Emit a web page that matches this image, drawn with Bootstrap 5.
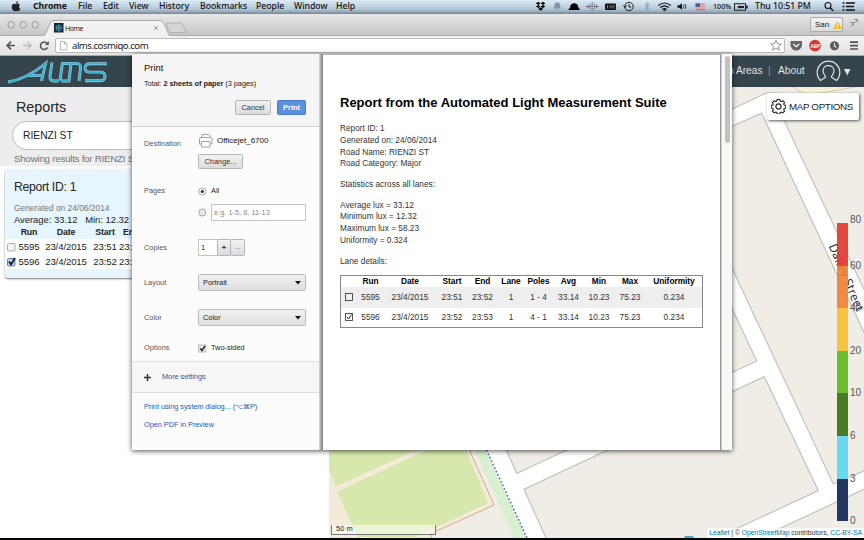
<!DOCTYPE html>
<html lang="en">
<head>
<meta charset="utf-8">
<title>ALMS - Print report</title>
<link href="https://cdn.jsdelivr.net/npm/bootstrap@5.3.0/dist/css/bootstrap.min.css" rel="stylesheet">
<style>
body{width:864px;height:540px;overflow:hidden;font-family:"Liberation Sans",Arial,sans-serif;color:#222;line-height:1.2;background:#000}
.desk{width:864px;height:540px}
svg{display:block;flex:none}
.osbar{height:14px;padding-left:11px;background:linear-gradient(#dcebf5,#b4c8d8 70%,#8698a6);border-bottom:1px solid #7d8a95;font:500 8.7px/13px "Noto Sans",sans-serif;color:#111}
.osbar span{flex:none;white-space:nowrap}
.os-app{font-weight:700;margin-left:12px;width:45px}
.tabstrip{height:22px;background:linear-gradient(#aaa,#aaa) bottom/100% 1px no-repeat,linear-gradient(#e8e8e8,#c4c4c4)}
.profile{width:33px;height:15px;margin-top:3px;border:1px solid #aaa;border-radius:2px;font-size:8px;background:linear-gradient(#f4f4f4,#dcdcdc)}
.toolbar-c{height:20px;background:linear-gradient(#f3f3f3,#e2e2e2);border-bottom:1px solid #a9a9a9}
.urlbox{width:730px;height:15px;background:#fff;border:1px solid #bbb;border-radius:2px;font:9.6px/13px "Noto Sans",sans-serif;letter-spacing:-.5px;color:#222}
.apphead{height:31px;background:#36444b;color:#dfe3e5;font-size:10.2px}
.apphead span{white-space:nowrap}
.workspace{height:451px;background:#fff}
.side{width:329px}
.finder{height:79px;background:#ededee;padding:11px 0 0 12px}
.finder h1{font-size:14.3px;line-height:18px;margin:0 0 5px 4px;font-weight:400}
.query{width:290px;height:29px;border:1px solid #bbb;border-radius:15px;background:#fff;padding-left:10px;font-size:10.3px;line-height:27px}
.found{font-size:9.9px;letter-spacing:-.3px;line-height:12px;margin:3px 0 0 2px;color:#777;width:119px;overflow:hidden;white-space:nowrap}
.report{margin:3px 0 0 5px;width:310px;height:109px;background:#e7f5fe;border-radius:3px;box-shadow:0 1px 2px #777;padding-top:10px}
.report h2{font-size:12.2px;letter-spacing:-.3px;line-height:16px;margin:0 0 7px 9px;font-weight:400}
.report p{margin:0 0 0 9px;line-height:12px;white-space:pre}
.runs{display:grid;grid-template-columns:12px 24px 50px 28px 13px;width:127px;overflow:hidden;font-size:9.6px;letter-spacing:-.12px;white-space:nowrap}
.runs>*{text-align:center}
.runs.hd{font-size:8.8px;font-weight:700;line-height:13px}
.runs.rw{line-height:15px;height:15px;align-items:center}
.rowsbg{background:#fff}
.map{width:535px;background:#f0ede6}
.mapopt{right:5px;top:6px;width:92px;height:27px;background:#fff;border-radius:2px;box-shadow:1px 1px 3px #555;font-size:9.8px;white-space:nowrap;letter-spacing:-.35px}
.legend{left:508px;top:136px}
.legend-row{height:42.6px}
.legend-row i{width:11px;height:100%}
.legend-row b{font:10px/10px "Liberation Sans",sans-serif;color:#555;margin:0 0 -5px 2px}
.legend .first{position:absolute;left:13px;top:-8px;font:10px/10px "Liberation Sans",sans-serif;color:#555}
.scale{left:2px;bottom:3px;width:105px;height:10px;background:rgba(255,255,255,.5);border:1.5px solid #777;border-top:0;font-size:7.5px;line-height:8px;padding-left:4px}
.attrib{right:0;bottom:0;height:10px;background:rgba(255,255,255,.75);font-size:6.75px;line-height:10px;padding:0 2px 0 2px;white-space:nowrap;color:#333}
.attrib span{color:#0078a8}
.dialog{left:132px;top:54px;width:600px;height:396px;background:#fcfcfc;box-shadow:0 1px 5px rgba(0,0,0,.7)}
.ctl{width:187px;font-size:7.4px;color:#222}
.ctl-top{height:73px;background:#f5f5f5;border-bottom:1px solid #d2d2d2;padding:7px 13px 0 12px}
.ctl-top h3{font-size:9.4px;line-height:14px;margin:0;color:#111}
.ctl-top p{line-height:10px;margin:4px 0 11px;white-space:nowrap;letter-spacing:-.05px}
.pbtn{font-size:7.4px;line-height:13px;height:15px;border:1px solid #b5b5b5;border-radius:1.5px;background:linear-gradient(#f2f2f2,#dcdcdc);text-align:center;color:#333}
.pbtn.blue{background:#5b91dc;border-color:#4a7dc7;color:#fff;font-weight:700}
.opt{padding:0 13px 0 12px}
.opt>label{width:54px;flex:none;color:#555;line-height:12px}
.opt.r1{height:51px}.opt.r2{height:52px}.opt.r3{height:35px}.opt.r4{height:26px}
.sel{width:108px;height:17px;border:1px solid #bcbcbc;border-radius:1.5px;background:linear-gradient(#f1f1f1,#dedede);padding:0 4px;line-height:15px}
.field{border:1px solid #c4c4c4;background:#fff}
.more{height:32px;background:#f6f6f6;border-top:1px solid #ddd;border-bottom:1px solid #ddd;padding-left:12px}
.lnk{color:#245bb5;letter-spacing:-.06px}
.gutter{width:4px;background:linear-gradient(90deg,#ddd,#999 60%,#888)}
.sheet{width:397px;background:#fff;border-top:1px solid #b5b5b0;padding:39px 0 0 17px;font-size:8.3px;line-height:11.8px;color:#333}
.sheet h2{font-size:13px;line-height:17px;font-weight:700;color:#000;margin:0 0 12px;white-space:nowrap}
.sheet p{margin:0 0 8.8px;white-space:nowrap}
.lanes{width:363px;height:53px;border:1px solid #888;font-size:8.3px;margin-top:-1px}
.lanes>div{display:grid;grid-template-columns:16px 27px 52px 32px 29px 28px 27px 33px 28px 34px 54px;text-align:center;align-items:center;height:20.5px;white-space:nowrap;justify-items:center}
.lanes>div.hd{height:11px;font-weight:700;color:#000}
.lanes>div.alt{background:#eee}
.rail{width:12px;background:linear-gradient(90deg,#999 0 1px,#ccc 1px 2px,#f8f8f8 2px);padding:2px 0 0 5px}
.thumb{width:5px;height:87px;border-radius:3px;background:#c1c1c1}
</style>
<script src="https://cdn.jsdelivr.net/npm/bootstrap@5.3.0/dist/js/bootstrap.bundle.min.js"></script>
</head>
<body>
<div class="desk d-flex flex-column position-relative">
 <div class="osbar d-flex align-items-center">
  <svg width="10" height="11" viewBox="0 0 10 11"><path d="M5 3.2C6 2.6 8 2.3 9 3.8 7.4 4.8 7.7 7 9.3 7.6 8.6 9.5 7.5 10.8 6.3 10.2 5.4 9.8 5 9.8 4.2 10.2 2.6 10.9.6 8 .7 5.6.8 3 3.300 2.400 5 3.200zM5 2.800C4.900 1.400 5.800.5 7 .3 7.100 1.600 6.200 2.700 5 2.800z" fill="#222"/></svg>
  <span class="os-app">Chrome</span><span style="width:25px">File</span><span style="width:26px">Edit</span><span style="width:30px">View</span><span style="width:41px">History</span><span style="width:56px">Bookmarks</span><span style="width:38px">People</span><span style="width:42px">Window</span><span style="width:196px">Help</span>
  <svg width="177" height="13" viewBox="532 0 177 13">
   <path d="M538.300 1.800l2.200 1.600-2.400 1.500-2.200-1.600zM543 1.800l2.300 1.600-2.300 1.500-2.300-1.600zM538.100 4.900l2.400 1.500-2.200 1.600-2.400-1.600zM543 4.900l2.300 1.500-2.300 1.600-2.300-1.600zM540.700 7.200l2.500 1.500-2.500 2-2.500-2z" fill="#000"/>
   <path d="M553.500 8.500c1.200-1 .9-4.300 1.500-5.300.6-1.100 4-1.100 4.600 0 .6 1 .3 4.300 1.500 5.300zM556 9h2.500l-1.200 1.500z" fill="#8495a3"/>
   <path d="M568.500 10c0-1.500 1.500-1.500 1.700-3 .2-5 7.800-5 8 0 .2 1.500 1.700 1.500 1.700 3z" fill="#000"/>
   <path d="M588 5v3M590 4v5M592.200 2v9M594.500 4v5M596.500 5v3M586 6.500h12.500" stroke="#556" stroke-width=".9" stroke-dasharray="1.300 .6"/>
   <rect x="605" y="3.500" width="11" height="6.500" rx="1" fill="#111"/><path d="M607.500 5v3.500M610 5v3.500M612 5v3.500M614 5v3.500" stroke="#aaa" stroke-width=".7"/>
   <circle cx="629" cy="6.500" r="4.200" fill="none" stroke="#222"/><path d="M629 4v3h2.200M623.500 5.500l1.500 2 1.500-2" fill="none" stroke="#222"/>
   <path d="M645 4l4 4.500-2 2v-8l2 2-4 4.500" fill="none" stroke="#8a99a5" stroke-width=".9"/>
   <path d="M658.300 5.500q6.200-5 12.400 0M660.300 7.500q4.200-3.400 8.400 0M662.300 9.400q2.200-1.600 4.400 0" fill="none" stroke="#111" stroke-width="1.200"/><circle cx="664.500" cy="10.300" r="1" fill="#111"/>
   <path d="M677.500 5.300h2l2.500-2v6.500l-2.500-2h-2z" fill="#111"/><path d="M683.400 4.800q1 1.700 0 3.500M685 4q1.700 2.500 0 5" fill="none" stroke="#222" stroke-width=".8"/>
   <rect x="695.500" y="3.500" width="9.500" height="6.500" fill="#eee"/><path d="M695.500 4h9.500M695.500 6h9.500M695.500 8h9.500M695.500 9.700h9.500" stroke="#d54a4a" stroke-width=".9"/><rect x="695.500" y="3.500" width="4.500" height="3.400" fill="#4a5b9a"/>
  </svg>
  <span style="width:21px;font-size:7.2px;margin-left:4px">100%</span>
  <svg width="14" height="8" viewBox="0 0 14 8"><rect x=".5" y=".7" width="11" height="6.500" fill="none" stroke="#222"/><path d="M12 2.500h1.700v3H12zM3 4l3-1.800v3.600zM6 3h4v2H6z" fill="#222"/></svg>
  <span style="width:69px;margin-left:7px">Thu 10:51 PM</span>
  <svg width="36" height="11" viewBox="0 0 36 11"><circle cx="4" cy="4.500" r="3" fill="none" stroke="#111" stroke-width="1.100"/><path d="M6.200 6.800l3 3" stroke="#111" stroke-width="1.400"/><path d="M18.500 2h2M22 2h9M18.500 5.500h2M22 5.500h8M18.500 9h2M22 9h9" stroke="#111" stroke-width="1.500"/></svg>
 </div>
 <div class="tabstrip d-flex">
  <svg width="200" height="22" viewBox="0 14 200 22">
   <g fill="#d8d8d8" stroke="#929292" stroke-width=".9"><circle cx="11.200" cy="24.800" r="3.300"/><circle cx="23.200" cy="24.800" r="3.300"/><circle cx="35.200" cy="24.800" r="3.300"/></g>
   <path d="M0 35.500h42c3 0 4-2 5-5l3-7q1-3 4-3h106q3 0 4 3l3 7c1 3 2 5 5 5h30" fill="#f1f1f1" stroke="#aaa"/>
   <path d="M46 35.600h122" stroke="#f1f1f1" stroke-width="1.400"/>
   <path d="M167 23h13q2 0 3 2l2.500 6q.5 1.500-1.500 1.500h-12q-2 0-3-2l-2.500-5.500q-.8-2 .5-2z" fill="#d4d4d4" stroke="#aaa" stroke-width=".8"/>
   <rect x="54" y="23" width="9.500" height="9.500" fill="#12222f"/><path d="M55.500 25l6 6M61.500 25l-6 6M58.700 24v8M55 27.800h8" stroke="#4793b5" stroke-width=".9"/><circle cx="58.700" cy="27.800" r="2.500" fill="none" stroke="#4793b5" stroke-width=".7"/>
   <text x="65" y="30.500" font-size="7" font-family="Noto Sans" fill="#222" textLength="18.500">Home</text>
   <path d="M154.300 26l3.600 3.600M157.900 26l-3.600 3.600" stroke="#888" stroke-width=".9"/>
  </svg>
  <div class="profile d-flex align-items-center ms-auto ps-1">San<svg class="ms-1" width="9" height="8" viewBox="0 0 9 8"><path d="M4.500 0L9 8H0z" fill="#f2bd3a"/><path d="M4.500 3v2.500M4.500 6.200v1" stroke="#fff"/></svg></div>
  <svg width="21" height="21" viewBox="0 0 21 21"><path d="M11 5.500h3.500V9M14.500 5.500l-3.500 4M7 8.500h3.500V12M10.500 9l-3 3.500" fill="none" stroke="#777" stroke-dasharray="1.200 .5"/></svg>
 </div>
 <div class="toolbar-c d-flex align-items-center">
  <svg width="55" height="20" viewBox="0 36 55 20"><path d="M15 45.500H7.500M11 41.700l-3.800 3.800 3.800 3.800" fill="none" stroke="#555" stroke-width="1.700"/><path d="M23 45.500h7.500M27.500 41.700l3.800 3.800-3.800 3.800" fill="none" stroke="#bbb" stroke-width="1.300"/><path d="M47 43.300a3.700 3.700 0 1 0 .6 4" fill="none" stroke="#555" stroke-width="1.600"/><path d="M48.800 41v4h-4z" fill="#555"/></svg>
  <div class="urlbox d-flex"><svg width="16" height="13" viewBox="0 0 16 13"><path d="M4.500 2.500h4l2.500 2.500v6h-6.500zM8.500 2.500v2.500h2.500" fill="#fafafa" stroke="#aaa" stroke-width=".8"/></svg><span>alms.cosmiqo.com</span>
  <svg class="ms-auto" style="margin-right:2px" width="12" height="13" viewBox="0 0 12 13"><path d="M5 1.300l1.500 3.400 3.700.3-2.800 2.400.9 3.700L5 9.200l-3.300 1.900.9-3.700L-.2 5l3.700-.3z" fill="none" stroke="#888" stroke-width=".9" transform="translate(1)"/></svg></div>
  <svg width="79" height="20" viewBox="785 36 79 20"><path d="M790.500 41h11.500v4.500q-1.500 5-5.800 5t-5.700-5z" fill="#666"/><path d="M793.300 44l3 2.700 3-2.700" fill="none" stroke="#fff" stroke-width="1.200"/><circle cx="815" cy="45.600" r="5.800" fill="#d33a30"/><text x="810.600" y="47.500" font-size="4.500" font-weight="700" fill="#fff" font-family="Liberation Sans">ABP</text><circle cx="834.500" cy="45.800" r="4.600" fill="#5c5c5c"/><path d="M834.500 43v3.200l2 1" fill="none" stroke="#eee" stroke-width="1.100"/><path d="M850 42.200h8M850 45.600h8M850 49h8" stroke="#555" stroke-width="1.700"/></svg>
 </div>
 <div class="apphead d-flex align-items-center">
  <svg width="120" height="31" viewBox="0 56 120 31">
   <defs><path id="alms" d="M8 82C21 80 34 73 45.500 63.500L41.500 81M28 75.500h14M52 62.500L50 76q-.6 5 4 5h5M62.500 62.500L60 80.500M61 63.500h15.500q4.500 0 4 4.500L79 81M71 64l-2 17h-8M107 63.700H90q-5 0-5 4.200t5 4.200h10q5 0 5 4.300t-5 4.300H85"/></defs>
   <use href="#alms" fill="none" stroke="#a8cfe0" stroke-width="2.900"/><use href="#alms" fill="none" stroke="#30b3cf" stroke-width="1.800"/></svg>
  <span style="margin-left:608px;width:40px">n Areas</span><span style="width:10px;color:#87949a">|</span><span style="width:37px">About</span>
  <svg width="38" height="31" viewBox="816 56 38 31"><path d="M821.500 80.500a11.300 11.300 0 1 1 16 0l-5-3.200c-1-1 2.500-2.500 2.500-6.500 0-7-11-7-11 0 0 4 3.500 5.500 2.500 6.500z" fill="none" stroke="#dfe3e5" stroke-width="1.200"/><path d="M845 69h6.500l-3.200 6.500z" fill="#dfe3e5"/></svg>
 </div>
 <div class="workspace d-flex">
  <div class="side">
   <div class="finder"><h1>Reports</h1><div class="query">RIENZI ST</div><div class="found">Showing results for RIENZI ST</div></div>
   <div class="report">
    <h2>Report ID: 1</h2>
    <p style="font-size:8.400px;color:#777">Generated on 24/06/2014</p>
    <p style="font-size:9.400px">Average: 33.12   Min: 12.32</p>
    <div class="runs hd"><i></i><span>Run</span><span>Date</span><span>Start</span><span class="text-start ps-1">End</span></div>
    <div class="rowsbg">
    <div class="runs rw"><svg width="12" height="10" viewBox="0 0 12 10"><rect x="2.500" y="1.500" width="7.500" height="7.500" rx="1" fill="#f4f4f4" stroke="#aaa"/></svg><span>5595</span><span>23/4/2015</span><span>23:51</span><span class="text-start">23:52</span></div>
    <div class="runs rw"><svg width="12" height="10" viewBox="0 0 12 10"><rect x="2.500" y="1.500" width="7.500" height="7.500" rx="1" fill="#b4d4f3" stroke="#5d80a8"/><path d="M4 4.500l2 3L10 1" fill="none" stroke="#111" stroke-width="1.600"/></svg><span>5596</span><span>23/4/2015</span><span>23:52</span><span class="text-start">23:53</span></div>
    </div>
   </div>
  </div>
  <div class="map position-relative overflow-hidden">
   <svg width="535" height="451" viewBox="329 87 535 451">
    <path d="M791 86l14 8 20-1.500 42-8z" fill="#f4efd6" stroke="#d9bfa6" stroke-width=".8"/>
    <path d="M329 440h136l29 65-64 29 3 5H329z" fill="#f3ebd8"/>
    <path d="M465 440l29 65-64 29 2 4" fill="none" stroke="#cdaa8e"/>
    <path d="M329 440h109L336 486.500l-7-17zM337 491.500L442 443h21l25 60-73 34H358z" fill="#d7e8ad"/>
    <path d="M470 440h12l45 98h-12.500z" fill="#d8f0cd"/>
    <g fill="#fff" stroke="#c6c5c3" stroke-width="1.300">
     <path d="M502 440l14.700 33.300L756.700 361 700 240V200L833.300 484 870 468.500v18L757 539h-43l104.300-48.300-54-114L524 489.300 546.500 539H528L482 440z"/>
     <path d="M720 114.600L766 93.200h12l6 27 86 182v43L761.700 113.200 720 131.500z"/>
    </g>
    <path d="M482 440l46 99" stroke="#fff" stroke-width="2"/>
    <path d="M486.500 450l40.500 88" stroke="#4a6fc6" stroke-width="1.500" stroke-dasharray="1.800 2"/>
    <text transform="translate(828.500 246) rotate(67)" font-family="Open Sans" font-size="12" font-weight="500" fill="#222" textLength="72">Dalley Street</text>
    <rect x="684" y="536" width="10" height="4" rx="2" fill="#4aa5cf"/>
   </svg>
   <div class="mapopt position-absolute d-flex align-items-center"><svg class="ms-1" style="margin-right:3px" width="15" height="15" viewBox="-7.500 -7.500 15 15"><circle r="2.600" fill="none" stroke="#222" stroke-width="1.100"/><path d="M-1.300-6.700h2.600l.4 1.600 1.100.5 1.500-.9 1.800 1.800-.9 1.500.5 1.100 1.600.4v2.600l-1.600.4-.5 1.100.9 1.500-1.800 1.800-1.500-.9-1.100.5-.4 1.600h-2.600l-.4-1.600-1.100-.5-1.500.9-1.800-1.800.9-1.500-.5-1.100-1.600-.4v-2.600l1.600-.4.5-1.100-.9-1.500 1.800-1.800 1.500.9 1.100-.5z" transform="translate(0 -.3)" fill="none" stroke="#222" stroke-width="1.100"/></svg>MAP OPTIONS</div>
   <div class="legend position-absolute">
    <span class="first">80</span>
    <div class="legend-row d-flex align-items-end"><i style="background:rgba(226,58,50,.92)"></i><b>60</b></div>
    <div class="legend-row d-flex align-items-end"><i style="background:rgba(240,125,46,.88)"></i><b>40</b></div>
    <div class="legend-row d-flex align-items-end"><i style="background:#f8c342"></i><b>20</b></div>
    <div class="legend-row d-flex align-items-end"><i style="background:#6cbf2c"></i><b>10</b></div>
    <div class="legend-row d-flex align-items-end"><i style="background:#477b24"></i><b>6</b></div>
    <div class="legend-row d-flex align-items-end"><i style="background:#68d9f0"></i><b>3</b></div>
    <div class="legend-row d-flex align-items-end"><i style="background:#233763"></i><b>0</b></div>
   </div>
   <div class="scale position-absolute">50 m</div>
   <div class="attrib position-absolute"><span>Leaflet</span> | © <span>OpenStreetMap</span> contributors, <span>CC-BY-SA</span></div>
  </div>
 </div>
 <div class="dialog position-absolute d-flex">
  <div class="ctl">
   <div class="ctl-top"><h3>Print</h3><p>Total: <b>2 sheets of paper</b> (3 pages)</p>
    <div class="d-flex justify-content-end"><div class="pbtn" style="width:36px;margin-right:6px">Cancel</div><div class="pbtn blue" style="width:29px">Print</div></div></div>
   <div class="opt r1 d-flex"><label style="padding-top:11px">Destination</label><div>
     <div class="d-flex align-items-center" style="height:27px"><svg width="19" height="15" viewBox="0 0 19 15"><path d="M4 4.500V1.500h7l1 1v2M3 11H1.500V6q0-1.500 1.500-1.500h9.500Q14 4.500 14 6v5h-1.500M3.500 8.500h8.500v5.500h-8.500z" fill="none" stroke="#999" stroke-width=".9"/></svg><span style="font-size:8px;color:#111">Officejet_6700</span></div>
     <div class="pbtn" style="width:45px">Change...</div></div></div>
   <div class="opt r2 d-flex"><label style="padding-top:7px">Pages</label><div>
     <div class="d-flex align-items-center" style="height:26px"><svg width="13" height="9" viewBox="0 0 13 9"><circle cx="4.300" cy="4.500" r="3.600" fill="#f2f2f2" stroke="#aaa"/><circle cx="4.300" cy="4.500" r="1.500" fill="#333"/></svg>All</div>
     <div class="d-flex align-items-center"><svg width="13" height="9" viewBox="0 0 13 9"><circle cx="4.300" cy="4.500" r="3.600" fill="#e8e8e8" stroke="#aaa"/></svg><div class="field" style="width:95px;height:17px;line-height:15px;padding-left:2px;color:#888">e.g. 1-5, 8, 11-13</div></div></div></div>
   <div class="opt r3 d-flex align-items-center"><label>Copies</label><div class="field" style="width:20px;height:17px;line-height:15px;padding-left:2px">1</div><div class="pbtn" style="width:14px;height:17px;line-height:16px;font-weight:700;margin-left:-1px">+</div><div class="pbtn" style="width:15px;height:17px;line-height:16px;color:#999;margin-left:-1px">–</div></div>
   <div class="opt r3 d-flex align-items-center"><label>Layout</label><div class="sel d-flex align-items-center justify-content-between">Portrait<svg width="6" height="4"><path d="M0 0h6L3 3.500z" fill="#111"/></svg></div></div>
   <div class="opt r3 d-flex align-items-center"><label>Color</label><div class="sel d-flex align-items-center justify-content-between">Color<svg width="6" height="4"><path d="M0 0h6L3 3.500z" fill="#111"/></svg></div></div>
   <div class="opt r4 d-flex align-items-center"><label>Options</label><svg width="13" height="9" viewBox="0 0 13 9"><rect x=".8" y="1" width="7" height="7" fill="#eee" stroke="#aaa" stroke-width=".8"/><path d="M2.300 4.500l1.700 2L7 1.800" fill="none" stroke="#222" stroke-width="1.400"/></svg>Two-sided</div>
   <div class="more d-flex align-items-center"><svg width="18" height="7"><path d="M3.500 0v7M0 3.500h7" stroke="#333" stroke-width="1.500"/></svg><span class="lnk">More settings</span></div>
   <div class="lnk" style="padding:8px 0 0 12px;line-height:12px;white-space:nowrap">Print using system dialog... (⌥⌘P)<div style="padding-top:6px">Open PDF in Preview</div></div>
  </div>
  <div class="gutter"></div>
  <div class="sheet">
   <h2>Report from the Automated Light Measurement Suite</h2>
   <p>Report ID: 1<br>Generated on: 24/06/2014<br>Road Name: RIENZI ST<br>Road Category: Major</p>
   <p>Statistics across all lanes:</p>
   <p>Average lux = 33.12<br>Minimum lux = 12.32<br>Maximum lux = 58.23<br>Uniformity = 0.324</p>
   <p>Lane details:</p>
   <div class="lanes">
    <div class="hd"><i></i><span>Run</span><span>Date</span><span>Start</span><span>End</span><span>Lane</span><span>Poles</span><span>Avg</span><span>Min</span><span>Max</span><span>Uniformity</span></div>
    <div class="alt"><svg width="8" height="8"><rect x=".5" y=".5" width="7" height="7" fill="none" stroke="#444" stroke-width=".9"/></svg><span>5595</span><span>23/4/2015</span><span>23:51</span><span>23:52</span><span>1</span><span>1 - 4</span><span>33.14</span><span>10.23</span><span>75.23</span><span>0.234</span></div>
    <div style="height:19.500px"><svg width="8" height="8"><rect x=".5" y=".5" width="7" height="7" fill="none" stroke="#444" stroke-width=".9"/><path d="M2 4l1.500 2L6.500 1.500" fill="none" stroke="#222"/></svg><span>5596</span><span>23/4/2015</span><span>23:52</span><span>23:53</span><span>1</span><span>4 - 1</span><span>33.14</span><span>10.23</span><span>75.23</span><span>0.234</span></div>
   </div>
  </div>
  <div class="rail"><div class="thumb"></div></div>
 </div>
</div>
</body>
</html>
